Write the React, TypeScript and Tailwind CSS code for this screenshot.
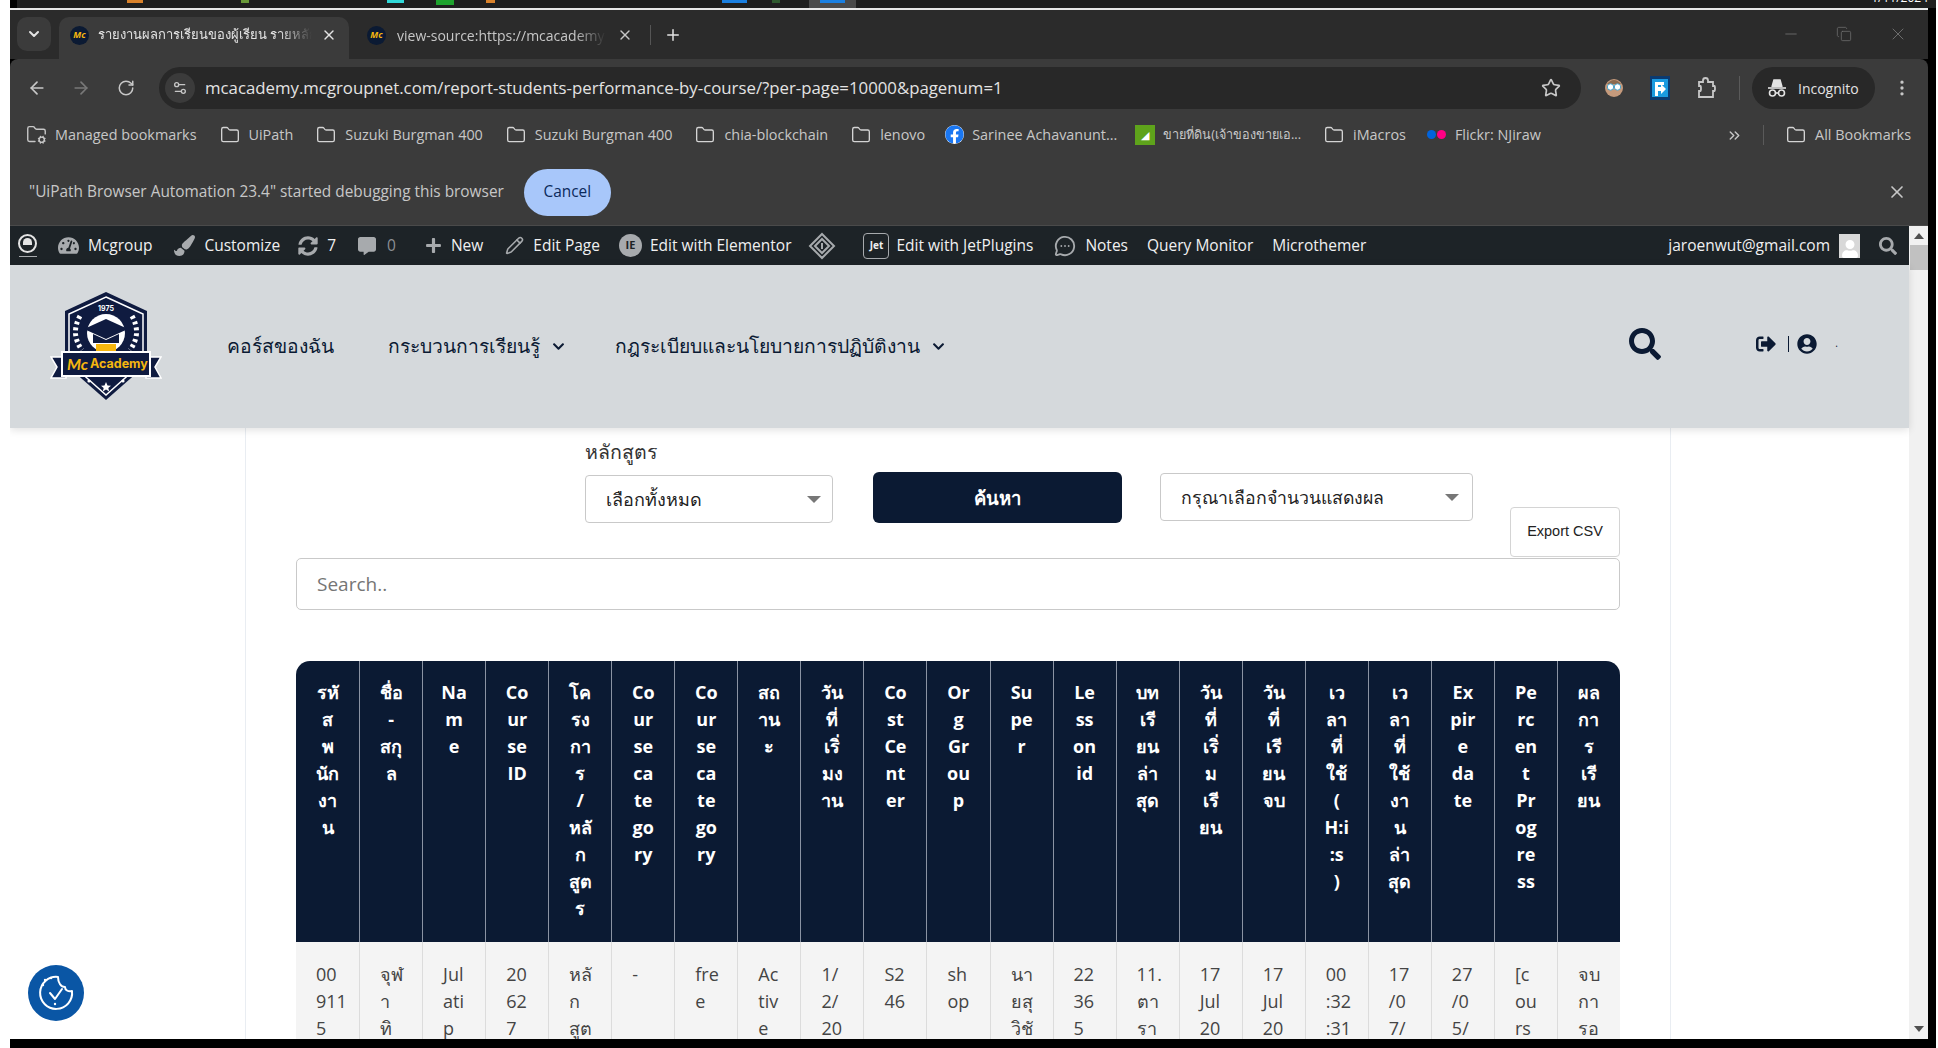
import { ArrowLeft, ArrowRight, RotateCw, Star, X, Plus, ChevronDown, Minus, Copy, EllipsisVertical, ChevronsRight, Folder, FolderCog, Settings2, Pencil, MessageCircleMore } from "lucide-react";
import { FaSearch, FaSignOutAlt, FaUserCircle, FaFacebook, FaCommentAlt, FaPlus, FaPaintBrush, FaSyncAlt, FaTachometerAlt, FaUser, FaChevronDown } from "react-icons/fa";

const headers = [
  ["รหั", "ส", "พ", "นัก", "งา", "น"],
  ["ชื่อ", "-", "สกุ", "ล"],
  ["Na", "m", "e"],
  ["Co", "ur", "se", "ID"],
  ["โค", "รง", "กา", "ร", "/", "หลั", "ก", "สูต", "ร"],
  ["Co", "ur", "se", "ca", "te", "go", "ry"],
  ["Co", "ur", "se", "ca", "te", "go", "ry"],
  ["สถ", "าน", "ะ"],
  ["วัน", "ที่", "เริ่", "มง", "าน"],
  ["Co", "st", "Ce", "nt", "er"],
  ["Or", "g", "Gr", "ou", "p"],
  ["Su", "pe", "r"],
  ["Le", "ss", "on", "id"],
  ["บท", "เรี", "ยน", "ล่า", "สุด"],
  ["วัน", "ที่", "เริ่", "ม", "เรี", "ยน"],
  ["วัน", "ที่", "เรี", "ยน", "จบ"],
  ["เว", "ลา", "ที่", "ใช้", "(", "H:i", ":s", ")"],
  ["เว", "ลา", "ที่", "ใช้", "งา", "น", "ล่า", "สุด"],
  ["Ex", "pir", "e", "da", "te"],
  ["Pe", "rc", "en", "t", "Pr", "og", "re", "ss"],
  ["ผล", "กา", "ร", "เรี", "ยน"],
];

const row = [
  ["00", "911", "5"],
  ["จุฬ", "า", "ทิ"],
  ["Jul", "ati", "p"],
  ["20", "62", "7"],
  ["หลั", "ก", "สูต"],
  ["-"],
  ["fre", "e"],
  ["Ac", "tiv", "e"],
  ["1/", "2/", "20"],
  ["S2", "46"],
  ["sh", "op"],
  ["นา", "ยสุ", "วิชั"],
  ["22", "36", "5"],
  ["11.", "ตา", "รา"],
  ["17", "Jul", "20"],
  ["17", "Jul", "20"],
  ["00", ":32", ":31"],
  ["17", "/0", "7/"],
  ["27", "/0", "5/"],
  ["[c", "ou", "rs"],
  ["จบ", "กา", "รอ"],
];

function Favicon() {
  return (
    <span className="w-[19px] h-[19px] rounded-full bg-[#0b1a33] flex items-center justify-center text-[9px] italic font-bold text-[#f5b60f] shrink-0">Mc</span>
  );
}

function Logo() {
  return (
    <svg width="112" height="108" viewBox="0 0 112 108" className="shrink-0">
      <path d="M56 0 L97 19 V72 L56 108 L15 72 V19 Z" fill="#0f1b40" />
      <path d="M56 5 L93 22 V70 L56 103 L19 70 V22 Z" fill="none" stroke="#fff" strokeWidth="1.5" />
      <text x="56" y="19" fontSize="7" fontWeight="700" fill="#fff" textAnchor="middle" fontFamily="Inter, sans-serif">1975</text>
      <circle cx="56" cy="41" r="19" fill="#fff" />
      <path d="M56 27 L78 37 L56 47 L34 37 Z" fill="#0f1b40" />
      <path d="M43 42 V51 H69 V42 L56 48 Z" fill="#0f1b40" />
      <rect x="46" y="52" width="20" height="8" fill="#f5b60f" />
      <path d="M30 24 Q20 42 32 58 M82 24 Q92 42 80 58" fill="none" stroke="#fff" strokeWidth="5" strokeDasharray="3 3" />
      <path d="M1 65 L16 65 V86 L1 86 L7 75 Z M111 65 L96 65 V86 L111 86 L105 75 Z" fill="#0f1b40" stroke="#fff" strokeWidth="1.5" />
      <rect x="12" y="60" width="88" height="24" fill="#0f1b40" stroke="#fff" strokeWidth="2" />
      <text x="17" y="78" fontSize="16" fontStyle="italic" fontWeight="700" fill="#f5b60f" fontFamily="Lato, sans-serif">Mc</text>
      <text x="40" y="76" fontSize="12.5" fontWeight="700" fill="#f5b60f" fontFamily="Inter, sans-serif">Academy</text>
      <path d="M56 90 l1.5 3.5 3.5 .3 -2.7 2.2 .9 3.4 -3.2 -1.9 -3.2 1.9 .9 -3.4 -2.7 -2.2 3.5 -.3 Z" fill="#fff" />
      <circle cx="39" cy="89" r="1.6" fill="#fff" />
      <circle cx="73" cy="89" r="1.6" fill="#fff" />
    </svg>
  );
}

function Bookmark({ label, ml }: { label: string; ml: string }) {
  return (
    <div className={`flex items-center gap-[9px] ${ml}`}>
      <Folder size={20} strokeWidth={1.6} className="text-[#d4d4d4]" />
      <span className="whitespace-nowrap">{label}</span>
    </div>
  );
}

function AdminItem({ icon, label, ml }: { icon?: React.ReactNode; label: string; ml: string }) {
  return (
    <div className={`flex items-center gap-[9px] ${ml}`}>
      {icon}
      <span className="whitespace-nowrap">{label}</span>
    </div>
  );
}

export default function App() {
  return (
    <div className="w-[1938px] h-[1048px] overflow-hidden bg-white pl-[10px] pr-[2px] font-['Open_Sans',sans-serif]">
      <div className="h-full bg-black flex flex-col">
        {/* desktop behind the window */}
        <div className="h-[10px] shrink-0 flex flex-col overflow-hidden">
          <div className="h-[8px] shrink-0 bg-[#1f1f1f] flex items-start relative">
            <div className="w-[7px] h-[8px] bg-black" />
            <div className="w-[16px] h-[3px] bg-[#d9822b] ml-[110px]" />
            <div className="w-[8px] h-[3px] bg-[#6a9a3a] ml-[98px]" />
            <div className="w-[17px] h-[3px] bg-[#30d8d8] ml-[138px]" />
            <div className="w-[18px] h-[5px] bg-[#1fa32e] ml-[32px]" />
            <div className="w-[9px] h-[3px] bg-[#d9822b] ml-[32px]" />
            <div className="w-[25px] h-[3px] bg-[#1a7fe0] ml-[227px]" />
            <div className="w-[8px] h-[3px] bg-[#2f5a2f] ml-[25px]" />
            <div className="w-[47px] h-[8px] bg-[#4a4a4a] ml-[29px] flex justify-center">
              <div className="w-[25px] h-[3px] bg-[#1a7fe0]" />
            </div>
            <span className="absolute right-[8px] top-[-9px] text-[12px] leading-[14px] text-white whitespace-nowrap">1/11/2024</span>
          </div>
          <div className="h-[2px] shrink-0 bg-[#e8e8e8] mr-[8px]" />
        </div>

        <div className="flex-1 min-h-0 flex flex-col mr-[8px] mb-[9px] overflow-hidden">
          {/* tab strip */}
          <div className="h-[49px] shrink-0 bg-[#2b2b2b] flex items-end text-[14px] text-[#e3e3e3]">
            <div className="w-[34px] h-[34px] ml-[7px] mb-[8px] rounded-[10px] bg-[#3b3b3b] flex items-center justify-center">
              <ChevronDown size={16} strokeWidth={3} />
            </div>
            <div className="w-[290px] h-[42px] ml-[8px] bg-[#3b3b3b] rounded-t-[10px] flex items-center pl-[11px] pr-[12px] pb-[6px] gap-[9px]">
              <Favicon />
              <span className="flex-1 overflow-hidden whitespace-nowrap text-[13px] [mask-image:linear-gradient(to_right,black_85%,transparent)]">รายงานผลการเรียนของผู้เรียน รายหลักสูตร</span>
              <X size={16} />
            </div>
            <div className="w-[301px] h-[42px] flex items-center pl-[18px] pr-[17px] pb-[6px] gap-[11px] text-[#c7c7c7]">
              <Favicon />
              <span className="flex-1 overflow-hidden whitespace-nowrap text-[14px] [mask-image:linear-gradient(to_right,black_85%,transparent)]">view-source:https://mcacademy</span>
              <X size={16} />
            </div>
            <div className="w-px h-[20px] bg-[#555] mb-[14px]" />
            <Plus size={18} className="ml-[13px] mb-[15px]" />
            <div className="flex-1" />
            <div className="flex items-center gap-[36px] mb-[15px] mr-[20px] text-[#6d6d6d]">
              <Minus size={18} strokeWidth={1.2} />
              <Copy size={16} strokeWidth={1.2} />
              <X size={20} strokeWidth={1.2} />
            </div>
          </div>

          {/* address bar */}
          <div className="h-[58px] shrink-0 bg-[#3b3b3b] rounded-t-[8px] flex items-center text-[#c7c7c7]">
            <ArrowLeft size={20} className="ml-[17px]" />
            <ArrowRight size={20} className="ml-[24px] text-[#787878]" />
            <RotateCw size={18} className="ml-[26px]" />
            <div className="ml-[24px] w-[1422px] h-[42px] rounded-full bg-[#282828] flex items-center pl-[6px] pr-[20px]">
              <div className="w-[30px] h-[30px] rounded-full bg-[#3b3b3b] flex items-center justify-center">
                <Settings2 size={16} />
              </div>
              <span className="ml-[10px] flex-1 text-[16.8px] text-[#e3e3e3] whitespace-nowrap">mcacademy.mcgroupnet.com/report-students-performance-by-course/?per-page=10000&amp;pagenum=1</span>
              <Star size={20} />
            </div>
            <svg width="22" height="22" viewBox="0 0 22 22" className="ml-[22px]">
              <circle cx="11" cy="11" r="9" fill="#c59a7c" />
              <path d="M4 7 Q11 -1 18 7 Z" fill="#8a6a50" />
              <circle cx="7.5" cy="10" r="3.2" fill="#fff" stroke="#4aa3c9" />
              <circle cx="14.5" cy="10" r="3.2" fill="#fff" stroke="#4aa3c9" />
            </svg>
            <svg width="20" height="24" viewBox="0 0 20 24" className="ml-[25px]">
              <rect width="20" height="24" fill="#0b3a70" />
              <rect x="2" y="3" width="16" height="18" fill="#1a9ae0" />
              <path d="M5 6 H14 V9 H8 V11 H11 V8 L16 13 L11 18 V15 H8 V20 H5 Z" fill="#fff" />
            </svg>
            <svg width="20" height="22" viewBox="0 0 20 22" fill="none" stroke="#c7c7c7" strokeWidth="1.8" className="ml-[26px]">
              <path d="M3 5 H7 V3.5 A2.5 2.5 0 0 1 12 3.5 V5 H17 V9 H18.5 A0.5 2.5 0 0 1 18.5 14 H17 V20 H3 V14 H4.5 A0.5 2.5 0 0 0 4.5 9 H3 Z" />
            </svg>
            <div className="w-px h-[24px] bg-[#5a5a5a] ml-[23px]" />
            <div className="ml-[12px] w-[123px] h-[42px] rounded-full bg-[#282828] flex items-center pl-[15px] gap-[11px] text-[14px] text-[#e3e3e3]">
              <svg width="20" height="20" viewBox="0 0 20 20" fill="none" stroke="#e3e3e3" strokeWidth="1.6">
                <path d="M5 9 L7 2 H13 L15 9" fill="#e3e3e3" />
                <path d="M1 10 H19" />
                <circle cx="5.5" cy="15" r="3" />
                <circle cx="14.5" cy="15" r="3" />
                <path d="M8.5 15 H11.5" />
              </svg>
              <span>Incognito</span>
            </div>
            <EllipsisVertical size={20} className="ml-[17px]" />
          </div>

          {/* bookmarks */}
          <div className="h-[36px] shrink-0 bg-[#3b3b3b] flex items-center text-[14.4px] text-[#c7c7c7]">
            <div className="flex items-center gap-[8px] ml-[16px]">
              <FolderCog size={21} strokeWidth={1.6} />
              <span className="whitespace-nowrap">Managed bookmarks</span>
            </div>
            <Bookmark label="UiPath" ml="ml-[23px]" />
            <Bookmark label="Suzuki Burgman 400" ml="ml-[23px]" />
            <Bookmark label="Suzuki Burgman 400" ml="ml-[23px]" />
            <Bookmark label="chia-blockchain" ml="ml-[23px]" />
            <Bookmark label="lenovo" ml="ml-[23px]" />
            <div className="flex items-center gap-[8px] ml-[20px]">
              <FaFacebook size={19} className="text-[#1a77f2] bg-white rounded-full" />
              <span className="whitespace-nowrap">Sarinee Achavanunt...</span>
            </div>
            <div className="flex items-center gap-[8px] ml-[18px]">
              <div className="w-[20px] h-[20px] bg-[#5ea31b] flex items-center justify-center text-white text-[11px]">◢</div>
              <span className="whitespace-nowrap text-[12.7px]">ขายที่ดิน(เจ้าของขายเอ...</span>
            </div>
            <Bookmark label="iMacros" ml="ml-[23px]" />
            <div className="flex items-center ml-[21px] gap-[1px]">
              <span className="w-[9px] h-[9px] rounded-full bg-[#0063dc]" />
              <span className="w-[9px] h-[9px] rounded-full bg-[#ff0084]" />
              <span className="ml-[8px] whitespace-nowrap">Flickr: NJiraw</span>
            </div>
            <div className="flex-1" />
            <ChevronsRight size={17} />
            <div className="w-px h-[20px] bg-[#5a5a5a] ml-[20px]" />
            <Bookmark label="All Bookmarks" ml="ml-[22px]" />
            <div className="w-[17px]" />
          </div>

          {/* debugging notice */}
          <div className="h-[73px] shrink-0 bg-[#3b3b3b] border-b border-[#4a4a4a] flex items-center text-[15.4px] text-[#c7c7c7] pt-[6px]">
            <span className="ml-[19px] whitespace-nowrap">"UiPath Browser Automation 23.4" started debugging this browser</span>
            <div className="ml-[20px] w-[87px] h-[47px] rounded-full bg-[#a8c7fa] text-[#0b2a5c] flex items-center justify-center">Cancel</div>
            <div className="flex-1" />
            <X size={20} className="mr-[21px]" />
          </div>

          <div className="flex-1 min-h-0 flex relative">
            <div className="flex-1 min-w-0 flex flex-col">
              {/* wp admin bar */}
              <div className="h-[39px] shrink-0 bg-[#1d2327] flex items-center text-[15.5px] text-[#f0f0f1]">
                <div className="ml-[8px] flex flex-col items-center shrink-0">
                  <div className="w-[19px] h-[19px] rounded-full border-2 border-[#e4e4e4] flex items-start justify-center pt-[2px]">
                    <span className="w-[9px] h-[7px] rounded-t-full bg-[#e4e4e4]" />
                  </div>
                  <div className="w-[18px] h-px bg-[#a7aaad] mt-[3px]" />
                </div>
                <AdminItem ml="ml-[21px]" label="Mcgroup" icon={<FaTachometerAlt size={21} className="text-[#a7aaad]" />} />
                <AdminItem ml="ml-[22px]" label="Customize" icon={<FaPaintBrush size={21} className="text-[#a7aaad]" />} />
                <AdminItem ml="ml-[18px]" label="7" icon={<FaSyncAlt size={20} className="text-[#a7aaad]" />} />
                <div className="flex items-center gap-[11px] ml-[22px] text-[#8c8f94]">
                  <FaCommentAlt size={18} className="text-[#a7aaad]" />
                  <span>0</span>
                </div>
                <AdminItem ml="ml-[29px]" label="New" icon={<FaPlus size={17} className="text-[#a7aaad]" />} />
                <AdminItem ml="ml-[22px]" label="Edit Page" icon={<Pencil size={19} className="text-[#a7aaad]" />} />
                <div className="flex items-center gap-[8px] ml-[19px]">
                  <span className="w-[23px] h-[23px] rounded-full bg-[#a7aaad] text-[#1d2327] text-[11px] font-bold flex items-center justify-center">IE</span>
                  <span className="whitespace-nowrap">Edit with Elementor</span>
                </div>
                <svg width="28" height="28" viewBox="0 0 28 28" className="ml-[17px]">
                  <path d="M14 2 L26 14 L14 26 L2 14 Z M14 7 L21 14 L14 21 L7 14 Z" fill="none" stroke="#a7aaad" strokeWidth="2" />
                  <path d="M14 11 V17" stroke="#a7aaad" strokeWidth="2" />
                </svg>
                <div className="flex items-center gap-[7px] ml-[27px]">
                  <span className="w-[26px] h-[26px] rounded-[4px] border border-[#a7aaad] text-[10px] font-bold flex items-center justify-center">Jet</span>
                  <span className="whitespace-nowrap">Edit with JetPlugins</span>
                </div>
                <AdminItem ml="ml-[21px]" label="Notes" icon={<MessageCircleMore size={22} className="text-[#a7aaad]" />} />
                <span className="ml-[19px] whitespace-nowrap">Query Monitor</span>
                <span className="ml-[19px] whitespace-nowrap">Microthemer</span>
                <div className="flex-1" />
                <span className="whitespace-nowrap">jaroenwut@gmail.com</span>
                <div className="ml-[9px] w-[21px] h-[24px] bg-[#d8d8d8] flex items-end justify-center">
                  <FaUser size={18} className="text-white" />
                </div>
                <FaSearch size={18} className="ml-[19px] mr-[12px] text-[#a7aaad]" />
              </div>

              {/* site header */}
              <div className="h-[163px] shrink-0 bg-[#d5d9dc] flex items-center text-[#0b1a33] text-[19.3px] shadow-[0_2px_8px_rgba(0,0,0,0.12)] relative z-10">
                <div className="ml-[40px] mt-[-2px]"><Logo /></div>
                <span className="ml-[65px] whitespace-nowrap">คอร์สของฉัน</span>
                <span className="ml-[54px] whitespace-nowrap">กระบวนการเรียนรู้</span>
                <FaChevronDown size={13} className="ml-[12px]" />
                <span className="ml-[50px] whitespace-nowrap">กฎระเบียบและนโยบายการปฏิบัติงาน</span>
                <FaChevronDown size={13} className="ml-[12px]" />
                <div className="flex-1" />
                <FaSearch size={32} className="mr-[95px] mt-[-6px]" />
                <div className="flex items-center mr-[71px] mt-[-6px]">
                  <FaSignOutAlt size={20} />
                  <div className="w-px h-[16px] bg-[#0b1a33] ml-[12px]" />
                  <FaUserCircle size={20} className="ml-[8px]" />
                  <span className="ml-[18px] text-[10px]">.</span>
                </div>
              </div>

              {/* page content */}
              <div className="flex-1 min-h-0 bg-white overflow-hidden">
                <div className="ml-[235px] w-[1426px] h-full bg-white border-x border-[#e9edf2] px-[50px] flex flex-col">
                  <div className="h-[130px] shrink-0 flex items-start">
                    <div className="ml-[289px] w-[248px] flex flex-col">
                      <span className="h-[47px] pt-[9px] text-[19.5px] text-[#333] whitespace-nowrap">หลักสูตร</span>
                      <div className="h-[48px] border border-[#c9c9c9] rounded-[4px] flex items-center justify-between pl-[20px] pr-[11px] text-[18px] text-[#222]">
                        <span>เลือกทั้งหมด</span>
                        <span className="w-0 h-0 border-x-[7px] border-x-transparent border-t-[7px] border-t-[#777]" />
                      </div>
                    </div>
                    <div className="ml-[40px] mt-[44px] w-[249px] h-[51px] rounded-[6px] bg-[#0b1a33] text-white font-semibold text-[18.5px] flex items-center justify-center">ค้นหา</div>
                    <div className="ml-[38px] mt-[45px] w-[313px] h-[48px] border border-[#c9c9c9] rounded-[4px] flex items-center justify-between pl-[20px] pr-[13px] text-[17.7px] text-[#222]">
                      <span>กรุณาเลือกจำนวนแสดงผล</span>
                      <span className="w-0 h-0 border-x-[7px] border-x-transparent border-t-[7px] border-t-[#777]" />
                    </div>
                    <div className="ml-[37px] mt-[79px] w-[110px] h-[50px] border border-[#d4d4d4] rounded-[4px] flex items-center justify-center text-[14.5px] text-[#222] font-['Liberation_Sans',sans-serif]">Export CSV</div>
                  </div>
                  <div className="h-[52px] shrink-0 border border-[#c9c9c9] rounded-[5px] flex items-center pl-[20px] text-[19px] text-[#757575]">Search..</div>
                  <table className="mt-[51px] w-full table-fixed border-separate border-spacing-0 rounded-t-[14px] overflow-hidden shrink-0">
                    <thead>
                      <tr>
                        {headers.map((lines, i) => (
                          <th key={i} className={`align-top bg-[#0b1a33] text-white text-[18px] leading-[27px] font-bold text-center pt-[18px] h-[281px] ${i > 0 ? "border-l border-[#8a93a3]" : ""}`}>
                            {lines.map((l, j) => <div key={j} className="whitespace-nowrap">{l}</div>)}
                          </th>
                        ))}
                      </tr>
                    </thead>
                    <tbody>
                      <tr>
                        {row.map((lines, i) => (
                          <td key={i} className={`align-top bg-[#f4f4f4] text-[#444] text-[18px] leading-[27px] pt-[19px] pl-[20px] ${i > 0 ? "border-l border-[#dcdcdc]" : ""}`}>
                            {lines.map((l, j) => <div key={j} className="whitespace-nowrap">{l}</div>)}
                          </td>
                        ))}
                      </tr>
                    </tbody>
                  </table>
                </div>
              </div>
            </div>

            {/* scrollbar */}
            <div className="w-[19px] shrink-0 bg-[#f1f1f1] flex flex-col items-center">
              <span className="mt-[7px] w-0 h-0 border-x-[5px] border-x-transparent border-b-[6px] border-b-[#505050]" />
              <div className="mt-[6px] w-[18px] h-[25px] bg-[#c1c1c1]" />
              <div className="flex-1" />
              <span className="mb-[7px] w-0 h-0 border-x-[5px] border-x-transparent border-t-[6px] border-t-[#505050]" />
            </div>

            {/* cookie badge */}
            <div className="absolute left-[18px] bottom-[18px] w-[56px] h-[56px] rounded-full bg-[#0a56a5] flex items-center justify-center z-20">
              <svg width="38" height="38" viewBox="0 0 38 38" fill="none" stroke="#fff" strokeWidth="2" strokeLinecap="round" strokeLinejoin="round">
                <path d="M21 3 A16 16 0 1 0 35 17 C31 18 28 16 28 13 C24 13 21 9 21 3 Z" />
                <path d="M13 19 L18 25 M18 25 L25 15" />
                <circle cx="18" cy="30" r="1.2" fill="#fff" stroke="none" />
                <circle cx="8" cy="6" r="1.2" fill="#fff" stroke="none" />
                <circle cx="14" cy="4" r="1.2" fill="#fff" stroke="none" />
                <circle cx="6" cy="11" r="1.2" fill="#fff" stroke="none" />
              </svg>
            </div>
          </div>
        </div>
      </div>
    </div>
  );
}
